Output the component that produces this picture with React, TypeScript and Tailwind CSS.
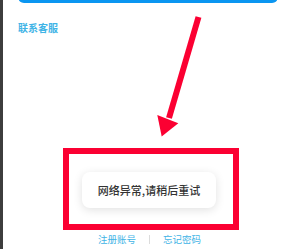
const cjk = { fontFamily: '"Noto Sans CJK SC", "Noto Sans", sans-serif' };

export default function App() {
  return (
    <div className="relative flex h-[249px] w-[292px] overflow-hidden bg-white" style={cjk}>
      {/* left edge of the frame */}
      <div className="w-[3px] shrink-0 bg-[#3d3d3d]" />

      <div className="flex flex-1 flex-col pl-[15px] pr-[14px]">
        {/* login button, scrolled mostly out of view */}
        <div className="-mt-[40px] h-[43px] rounded-[6px] bg-[#0b96f1]" />

        <a className="mt-[20px] text-[10px] font-semibold leading-[10px] text-[#3fb4e6]">联系客服</a>

        <div className="flex-1" />

        <div className="mb-[5px] flex items-center justify-center gap-[13px] pl-[3px] text-[9.5px] leading-[10px] text-[#3fb4e6]">
          <span>注册账号</span>
          <span className="h-[9px] w-px bg-[#dcdcdc]" />
          <span>忘记密码</span>
        </div>
      </div>

      {/* toast */}
      <div className="absolute left-[82px] top-[172px] flex h-[36px] w-[134px] items-center justify-center rounded-[8px] bg-white text-[11px] font-medium text-[#333] shadow-[0_2px_10px_rgba(0,0,0,0.12)]">
        网络异常,请稍后重试
      </div>

      {/* annotation box */}
      <div className="absolute left-[63px] top-[148px] h-[82px] w-[176px] border-[6px] border-[#fb0032]" />

      {/* annotation arrow */}
      <svg className="absolute inset-0" width="292" height="249" viewBox="0 0 292 249">
        <line x1="198.5" y1="17" x2="169" y2="118" stroke="#fb0032" strokeWidth="6" />
        <polygon points="157.3,115 178.3,123.3 161.7,136.5" fill="#fb0032" />
      </svg>
    </div>
  );
}
